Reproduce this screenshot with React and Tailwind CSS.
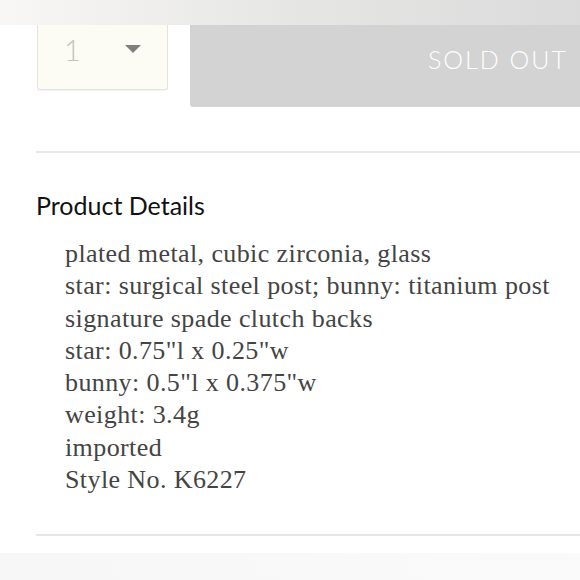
import React from "react";

const details = [
    "plated metal, cubic zirconia, glass",
    "star: surgical steel post; bunny: titanium post",
    "signature spade clutch backs",
    "star: 0.75\"l x 0.25\"w",
    "bunny: 0.5\"l x 0.375\"w",
    "weight: 3.4g",
    "imported",
    "Style No. K6227",
];

const App = () => {
    return (
        <div className="w-[580px] h-[580px] overflow-hidden bg-white relative">
            {/* --- top band --- */}
            <div className="h-[25px] w-full bg-gradient-to-r from-[#f8f7f5] via-[#e6e6e5] to-[#dbdbdb]" />

            {/* --- quantity + sold out --- */}
            <div className="flex items-start pl-[37px]">
                <div className="w-[131px] h-[65px] bg-[#fdfcf4] border border-t-0 border-[#e4e4dc] rounded-b-[3px] shadow-[0_1px_1px_rgba(0,0,0,0.05)] flex items-start">
                    <span
                        className="ml-[26px] mt-[10px] text-[29px] leading-none font-light text-[#c4c4be]"
                        style={{fontFamily: "Lato, sans-serif"}}
                    >
                        1
                    </span>
                    <span className="ml-[44px] mt-[20px] w-0 h-0 border-l-[8px] border-r-[8px] border-t-[8px] border-l-transparent border-r-transparent border-t-[#7f7f7f]" />
                </div>
                <div className="ml-[22px] flex-1 h-[82px] bg-[#d3d3d3] rounded-bl-[3px] flex items-start justify-end pr-[12px] pt-[22px]">
                    <span
                        className="text-[25px] tracking-[2px] font-light text-white leading-none"
                        style={{fontFamily: "Lato, sans-serif"}}
                    >
                        SOLD OUT
                    </span>
                </div>
            </div>

            {/* --- divider --- */}
            <div className="ml-[36px] mt-[44px] border-t-2 border-[#e8e8e8]" />

            {/* --- product details --- */}
            <h2
                className="ml-[36px] mt-[40px] text-[25px] leading-none text-[#111]"
                style={{fontFamily: "Lato, sans-serif"}}
            >
                Product Details
            </h2>
            <ul
                className="ml-[65px] mt-[20px] text-[26px] tracking-[0.4px] leading-[32.3px] text-[#444]"
                style={{fontFamily: "'Liberation Serif', serif"}}
            >
                {details.map((line) => (
                    <li key={line}>{line}</li>
                ))}
            </ul>

            {/* --- bottom divider --- */}
            <div className="ml-[36px] mt-[38px] border-t-2 border-[#e6e6e6]" />

            {/* --- bottom band --- */}
            <div className="absolute left-0 right-0 bottom-0 h-[27px] bg-gradient-to-r from-[#f7f7f7] to-[#fafafa]" />
        </div>
    );
};

export default App;
